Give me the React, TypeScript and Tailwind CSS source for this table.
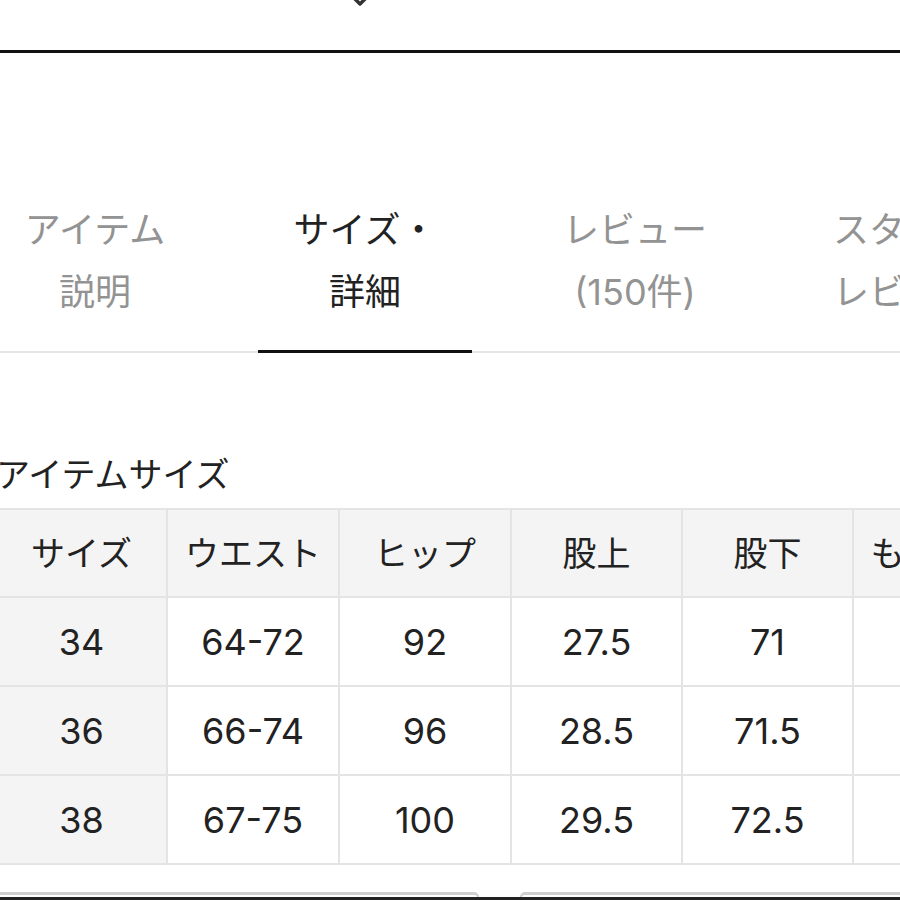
import React from "react";

const tabs = [
  { top: "アイテム", bottom: "説明", active: false },
  { top: "サイズ・", bottom: "詳細", active: true },
  { top: "レビュー", bottom: "(150件)", active: false },
  { top: "スタッフ", bottom: "レビュー", active: false },
];

const headers = ["サイズ", "ウエスト", "ヒップ", "股上", "股下", "もも周り"];

const rows = [
  ["34", "64-72", "92", "27.5", "71", "58"],
  ["36", "66-74", "96", "28.5", "71.5", "59"],
  ["38", "67-75", "100", "29.5", "72.5", "60"],
];

const colWidths = ["w-[171px]", "w-[172px]", "w-[172px]", "w-[171px]", "w-[171px]", "w-[171px]"];

const App: React.FC = () => {
  return (
    <div
      className="w-[900px] h-[900px] overflow-hidden bg-white text-[#222]"
      style={{ fontFamily: "Inter, 'Noto Sans CJK JP', sans-serif" }}
    >
      {/* top bar */}
      <div className="h-[50px] flex items-start pl-[350px]">
        <svg width="20" height="12" viewBox="0 0 20 12" className="-mt-[5px]">
          <path d="M3 2 L10 9 L17 2" fill="none" stroke="#333" strokeWidth="3.5" strokeLinejoin="round" />
        </svg>
      </div>
      <div className="h-[3px] bg-[#111]" />

      {/* tabs */}
      <div className="mt-[146px] border-b-2 border-[#e6e6e6]">
        <div className="flex gap-[56px] -ml-[12px] w-[1000px]">
          {tabs.map((t) => (
            <div
              key={t.top}
              className={
                "w-[214px] shrink-0 flex flex-col items-center text-[36px] leading-[62px] pb-[27px] whitespace-nowrap -mb-[2px] border-b-[3px] " +
                (t.active ? "border-[#111] text-[#222]" : "border-transparent text-[#939393]")
              }
            >
              <span>{t.top}</span>
              <span>{t.bottom}</span>
            </div>
          ))}
        </div>
      </div>

      {/* title */}
      <div className="mt-[102px] -ml-[4px] text-[34px] leading-[40px] whitespace-nowrap">
        アイテムサイズ
      </div>

      {/* table */}
      <div className="mt-[13px] -ml-[5px] w-[1100px]">
        <div className="flex border-t-2 border-l-2 border-[#e4e4e4] w-max">
          {headers.map((h, i) => (
            <div
              key={h}
              className={
                colWidths[i] +
                " h-[88px] shrink-0 flex items-center justify-center bg-[#f4f4f4] border-r-2 border-b-2 border-[#e4e4e4] text-[34px] whitespace-nowrap"
              }
            >
              {h}
            </div>
          ))}
        </div>
        {rows.map((r) => (
          <div key={r[0]} className="flex border-l-2 border-[#e4e4e4] w-max">
            {r.map((v, i) => (
              <div
                key={i}
                className={
                  colWidths[i] +
                  " h-[89px] shrink-0 flex items-center justify-center border-r-2 border-b-2 border-[#e4e4e4] text-[36px] " +
                  (i === 0 ? "bg-[#f4f4f4]" : "bg-white")
                }
              >
                {v}
              </div>
            ))}
          </div>
        ))}
      </div>

      {/* bottom buttons peeking */}
      <div className="mt-[27px] flex gap-[41px] -ml-[4px] w-[1000px]">
        <div className="w-[483px] h-[5px] shrink-0 border-t-[3px] border-x-2 border-[#cfcfcf] rounded-t-[8px] bg-white" />
        <div className="w-[500px] h-[5px] shrink-0 border-t-[3px] border-x-2 border-[#cfcfcf] rounded-t-[8px] bg-white" />
      </div>
      <div className="h-[4px] bg-[#222]" />
    </div>
  );
};

export default App;
